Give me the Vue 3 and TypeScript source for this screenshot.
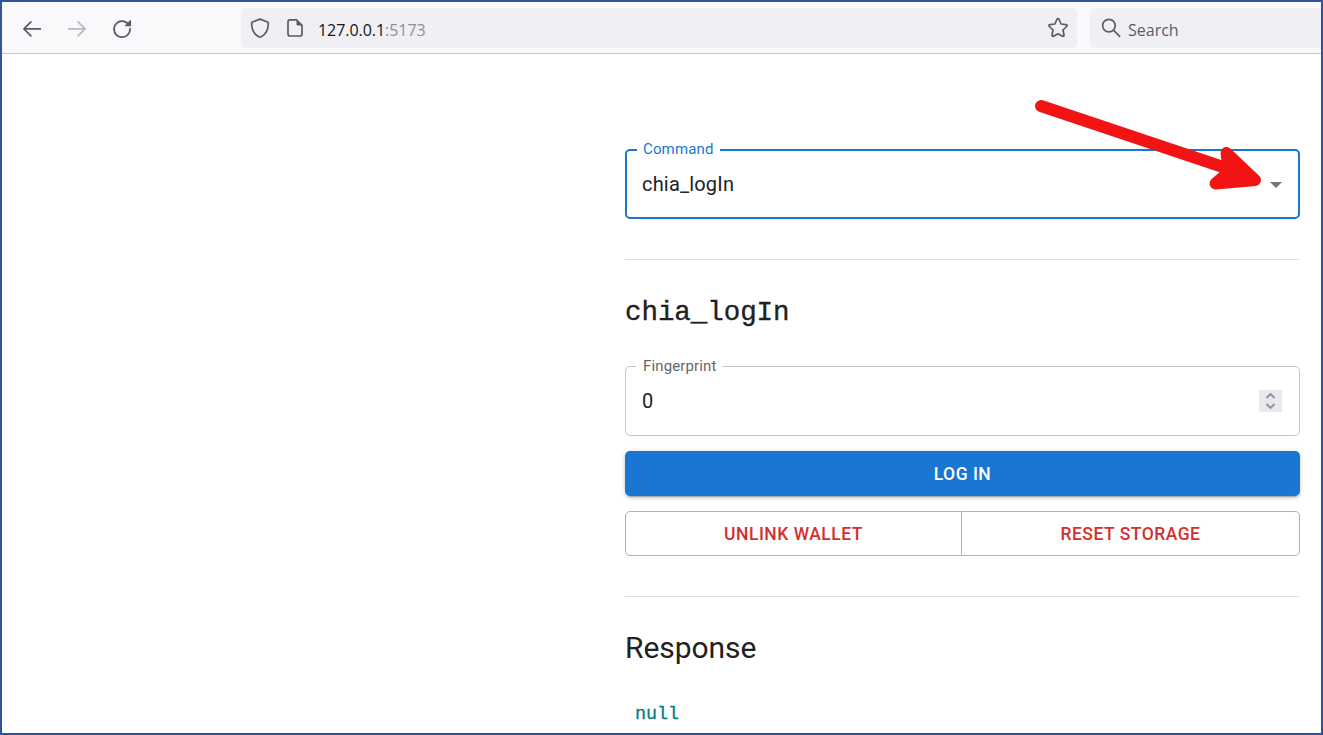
<script setup lang="ts">
import { ref } from 'vue'

const command = ref('chia_logIn')
const fingerprint = ref(0)
const response = ref<string | null>(null)
const address = { host: '127.0.0.1', port: ':5173' }
const storageActions: string[] = ['Unlink Wallet', 'Reset Storage']
</script>

<template>
  <div class="window">
    <header class="toolbar">
      <nav class="nav">
        <svg class="icon" width="20" height="20" viewBox="0 0 20 20"><path d="M18.4 9.8H2M8.9 2.8 1.9 9.8l7 7" /></svg>
        <svg class="icon disabled" width="20" height="20" viewBox="0 0 20 20"><path d="M1.6 9.8H18M11.1 2.8l7 7-7 7" /></svg>
        <svg class="icon" width="20" height="20" viewBox="0 0 20 20">
          <path d="M16.2 5.1A8 8 0 1 0 18 9.6" />
          <path class="solid" d="M19 1.2v5.6q0 .4-.4.4H13q-.6 0-.2-.5l5.5-5.7q.7-.5.7.2Z" />
        </svg>
      </nav>
      <div class="address">
        <svg class="icon" width="20" height="22" viewBox="0 0 20 22"><path d="M10 2.1 17.5 5q.9.4.9 1.3c-.2 6.2-2.3 11.2-7.2 13.5q-1.2.6-2.4 0C3.9 17.5 1.8 12.5 1.6 6.300q0-.9.9-1.3Z" /></svg>
        <svg class="icon page" width="16" height="20" viewBox="0 0 16 20">
          <path d="M9.500 1.900H3Q1 1.900 1 3.900V16q0 2 2 2h10q2 0 2-2V7.400L9.500 1.900Z" />
          <path class="solid" d="M9.500 1.500v4.900q0 1 1 1H15.500Z" />
        </svg>
        <span class="url">{{ address.host }}<span class="port">{{ address.port }}</span></span>
        <svg class="icon star" width="22" height="22" viewBox="0 0 22 22"><path d="M9.900 2.500q1.100-1.800 2.200 0l2 4.500 4.900.6q2 .5.600 1.900l-3.600 3.500 1 5q.1 1.800-1.500 1.200L11 16.800l-4.500 2.400q-1.600.6-1.500-1.200l1-5L2.400 9.500Q1 8.100 3 7.600L7.900 7Z" /></svg>
      </div>
      <div class="search">
        <svg class="icon" width="20" height="20" viewBox="0 0 20 20"><circle cx="7.900" cy="7.600" r="6.300" /><path d="m12.500 12.200 6.100 6.100" /></svg>
        <span>Search</span>
      </div>
    </header>

    <main class="content">
      <fieldset class="field focused">
        <legend>Command</legend>
        <div class="value">
          <span>{{ command }}</span>
          <svg class="caret" width="12" height="6" viewBox="0 0 12 6"><path d="M0 0h12L6 6Z" /></svg>
        </div>
      </fieldset>
      <hr />
      <h2 class="mono">{{ command }}</h2>
      <fieldset class="field plain">
        <legend>Fingerprint</legend>
        <div class="value">
          <span>{{ fingerprint }}</span>
          <svg class="spinner" width="23" height="22" viewBox="0 0 23 22"><path d="m7.500 8 4-4 4 4M7.500 14l4 4 4-4" /></svg>
        </div>
      </fieldset>
      <button class="primary">Log In</button>
      <div class="group">
        <button v-for="label in storageActions" :key="label">{{ label }}</button>
      </div>
      <hr />
      <h2>Response</h2>
      <pre>{{ response === null ? 'null' : response }}</pre>
    </main>

    <svg class="pointer" width="240" height="110" viewBox="0 0 240 110">
      <path class="shaft" d="M11 16 205 81" />
      <path class="head" d="M196.500 63 225 90 185.500 93.500 199 82Z" />
    </svg>
  </div>
</template>

<style>
body { margin: 0; overflow: hidden; }
</style>

<style scoped>
* { box-sizing: border-box; }
.window {
  position: relative;
  height: 735px;
  border: 2px solid #3052a0;
  overflow: hidden;
  background: #fff;
  color: #212121;
  font-family: Roboto, sans-serif;
}
.toolbar {
  display: flex;
  height: 52px;
  padding: 6px 0 5px 20px;
  border-bottom: 1px solid #c9c9cd;
  background: #f9f9fb;
  font: 16px "Open Sans", sans-serif;
}
.icon { flex: none; fill: none; stroke: #5b5b66; stroke-width: 1.7; stroke-linecap: round; stroke-linejoin: round; }
.icon .solid { fill: #5b5b66; stroke: none; }
.disabled { opacity: .4; }
.nav { display: flex; align-items: center; gap: 25px; width: 219px; padding-top: 1px; }
.address {
  display: flex;
  align-items: center;
  width: 836px;
  height: 40px;
  padding: 0 8px 1px 9px;
  border-radius: 5px;
  background: #f0f0f4;
}
.page { margin-left: 17px; }
.url { margin: 5px 0 0 15px; color: #15141a; letter-spacing: -.05px; }
.port { color: #8f8f96; }
.star { margin-left: auto; }
.search {
  display: flex;
  align-items: center;
  gap: 7px;
  flex: 1;
  height: 40px;
  margin-left: 13px;
  padding: 0 0 1px 11px;
  border-radius: 5px 0 0 5px;
  background: #f0f0f4;
  color: #5b5b66;
}
.search span { margin-top: 5px; }
.content { width: 675px; margin-left: 623px; padding-top: 86px; }
.field {
  display: block;
  width: 675px;
  min-width: 0;
  margin: 0;
  border-radius: 5px;
}
.field legend { height: 19px; line-height: 19px; font-size: 15px; letter-spacing: .14px; }
.focused { height: 79px; padding: 0 16px 0 10px; border: 2px solid #1976d2; }
.focused legend { padding: 0 6px; color: #1976d2; }
.plain { height: 79px; padding: 0 17px 0 10px; border: 1px solid #c4c4c4; }
.plain legend { padding: 0 5px 0 7px; color: #666; }
.value { display: flex; align-items: center; justify-content: space-between; height: 30px; margin-top: 10px; padding-left: 5px; font-size: 20px; letter-spacing: .19px; }
.plain .value { padding-left: 6px; }
.caret { margin-top: 1px; fill: #757575; }
.spinner { fill: none; stroke: #8f8f9d; stroke-width: 1.9; background: #e9e9ed; }
hr { height: 1px; margin: 40px 0 0; border: 0; background: #e0e0e0; }
h2 { margin: 31px 0 0; font-size: 30px; font-weight: 400; line-height: 40px; letter-spacing: -.05px; }
h2.mono {
  margin: 33px 0 24px;
  font: 27.5px/40px "Liberation Mono", monospace;
  -webkit-text-stroke: .35px;
}
button {
  height: 45px;
  padding: 0;
  border: 0;
  font: 500 17.5px/30px Roboto, sans-serif;
  letter-spacing: .5px;
  text-transform: uppercase;
}
.primary {
  display: block;
  width: 100%;
  margin-top: 15px;
  border-radius: 5px;
  background: #1976d2;
  color: #fff;
  box-shadow: 0 4px 1px -3px #0003, 0 2px 3px #00000024, 0 1px 6px #0000001f;
}
.group { display: flex; margin-top: 15px; }
.group button { flex: 1; border: 1px solid #e99898; background: transparent; color: #d32f2f; }
.group button:first-child { flex: 0 0 337px; border-radius: 5px 0 0 5px; }
.group button:last-child { border-left: 0; border-radius: 0 5px 5px 0; }
pre {
  margin: 35px 0 0 10px;
  color: #008080;
  font: 18.33px/24px "Liberation Mono", monospace;
  -webkit-text-stroke: .3px;
}
.pointer { position: absolute; left: 1028px; top: 88px; fill: #f21414; stroke: #f21414; stroke-linejoin: round; stroke-linecap: round; }
.shaft { stroke-width: 12; }
.head { stroke-width: 12; }
</style>
